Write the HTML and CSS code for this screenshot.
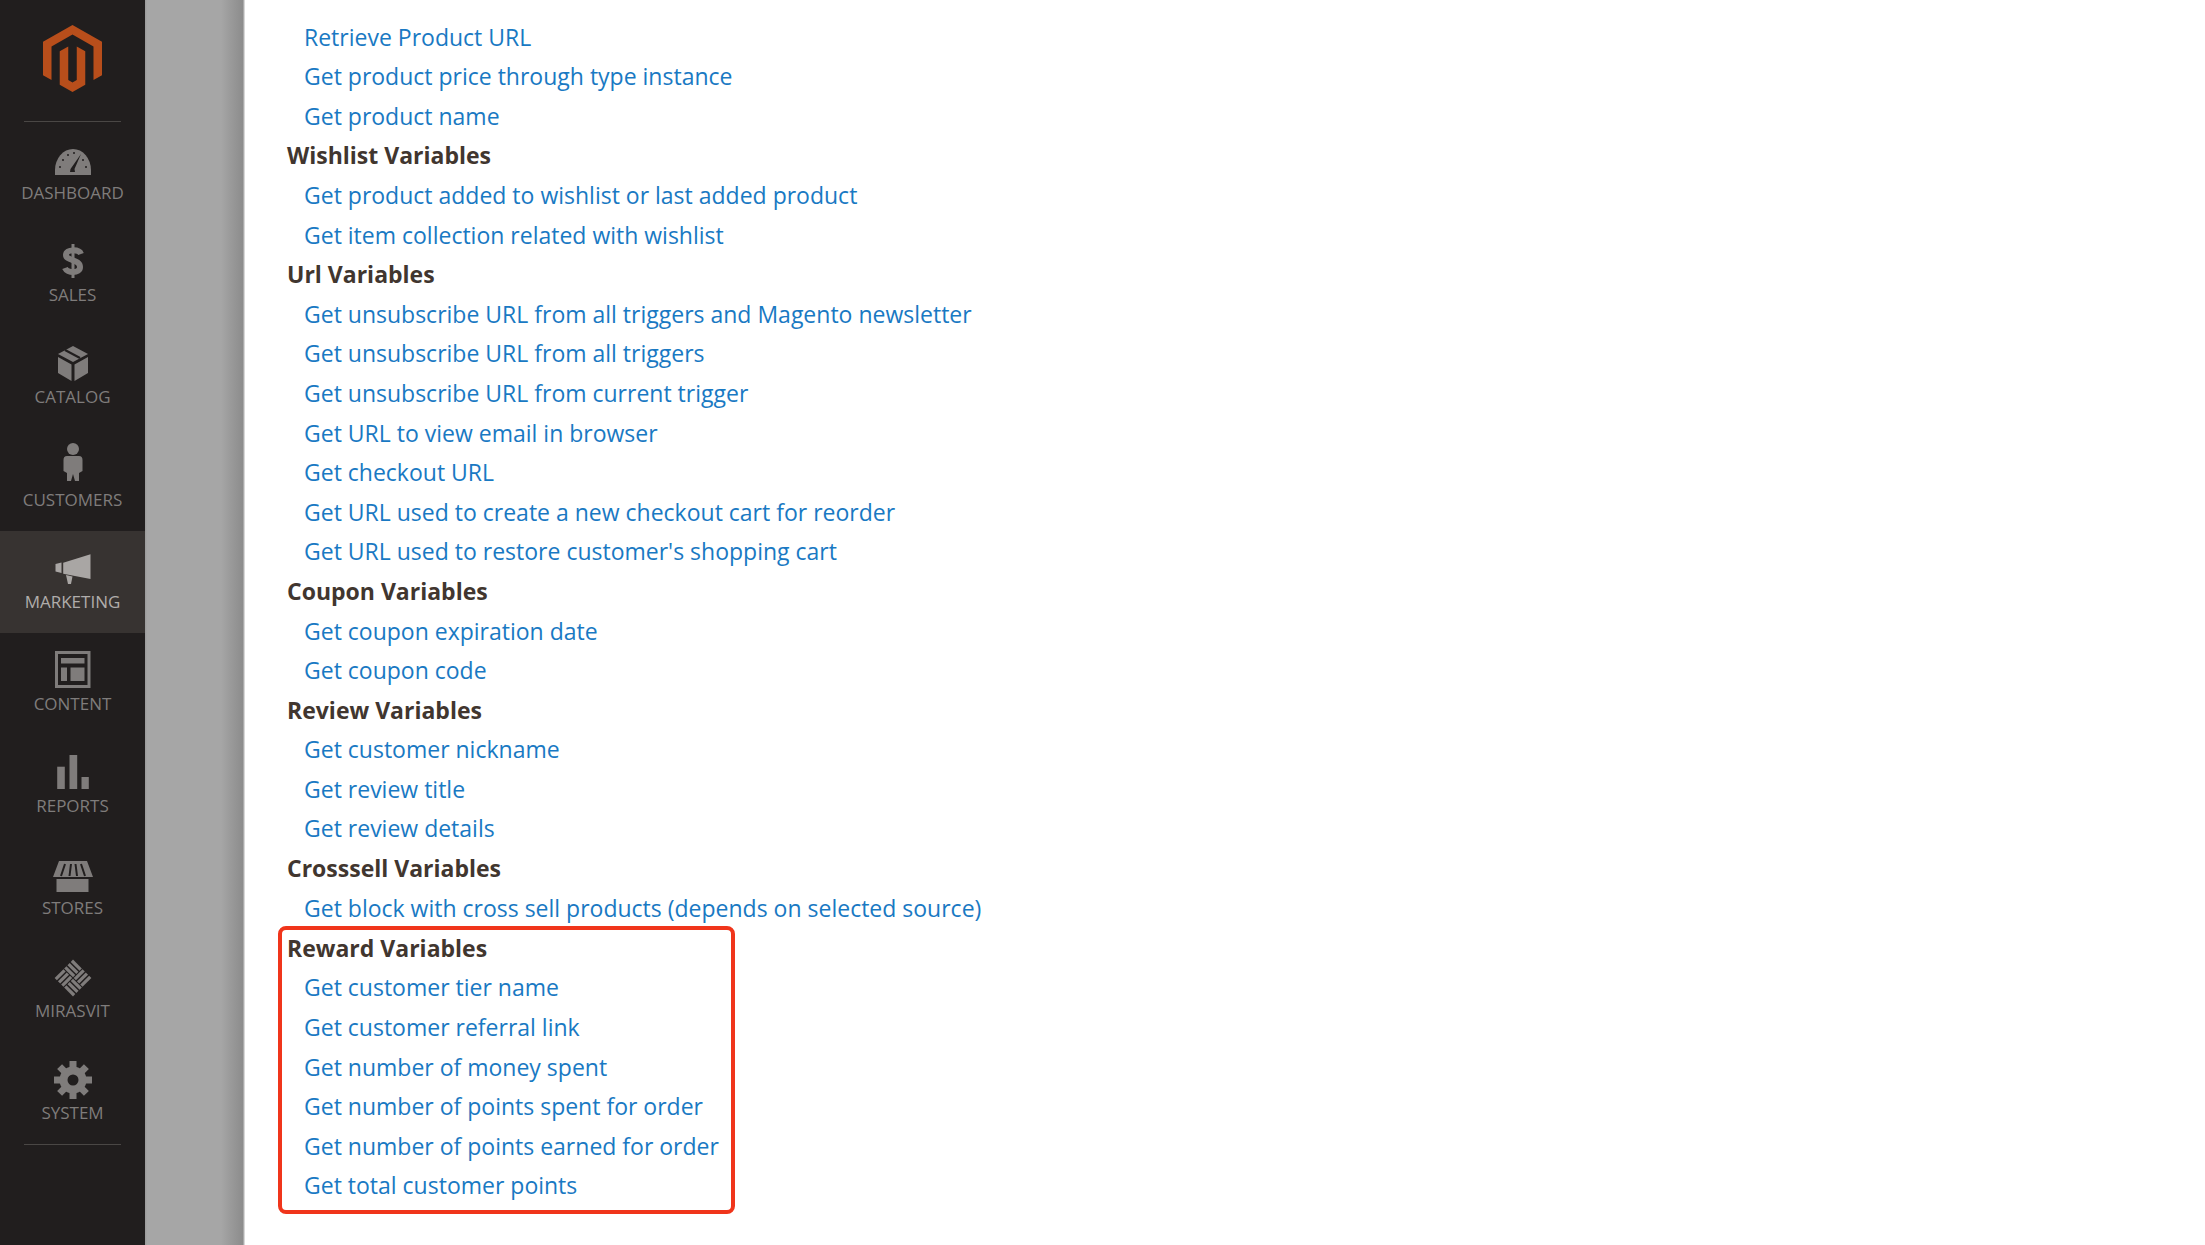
FILE: index.html
```html
<!DOCTYPE html>
<html lang="en">
<head>
<meta charset="utf-8">
<title>Email variables</title>
<link rel="stylesheet" href="styles.css">
</head>
<body>
<div class="page">
<aside class="sidebar">
  <div class="logo">
    <svg class="logo-svg" viewBox="1.6 0 20.8 24" preserveAspectRatio="none"><path d="M12 0 1.6 6v12l3 1.7V7.7L12 3.4l7.4 4.3v12l3-1.7V6z"/><path d="M13.5 19.7 12 20.6l-1.500-.9V7.700L7.500 9.400v12L12 24l4.500-2.600v-12l-3-1.700z"/></svg>
  </div>
  <nav class="nav">
    <a class="nav-item"><svg class="icon" viewBox="0 0 40 40"><path d="M2 33V28A18 21 0 0 1 38 28V33Z"/><g class="cut"><circle cx="7" cy="25" r="1"/><circle cx="10" cy="18" r="1"/><circle cx="15" cy="13" r="1"/><circle cx="21" cy="11" r="1"/><circle cx="33" cy="25" r="1"/><circle cx="30" cy="18" r="1"/><path d="M28 12 21.500 27 22 30 17 30 17.500 27Z"/></g></svg><span class="label">Dashboard</span></a>
    <a class="nav-item"><svg class="icon" viewBox="0 0 40 40"><path class="stroke" d="M28 10C26 5 13 5 13 11C13 17 27 15 27 23C27 30 14 29 12 24"/><path class="stroke thin" d="M20 0V34"/></svg><span class="label">Sales</span></a>
    <a class="nav-item"><svg class="icon" viewBox="0 0 40 40"><path d="M20 0 35 8 20 16 5 8Z"/><path d="M5 11 18.500 18.500V35L5 27Z"/><path d="M35 11 21.500 18.500V35L35 27Z"/><path class="cut-line" d="M12 4 27 12"/></svg><span class="label">Catalog</span></a>
    <a class="nav-item"><svg class="icon" viewBox="0 0 40 40"><circle cx="20" cy="0" r="6"/><path d="M14 7H26Q29.500 7 29.500 11V22L26 24V32H22L20 25 18 32H14V24L10.500 22V11Q10.500 7 14 7Z"/></svg><span class="label">Customers</span></a>
    <a class="nav-item active"><svg class="icon" viewBox="0 0 40 40"><path d="M37.500 3.300V28L10.200 22.700V11.700Z"/><path d="M2.500 13 8.500 11.500V22L2.500 20.500Z"/><path d="M13 24 19.500 25.500 18 33H15Z"/></svg><span class="label">Marketing</span></a>
    <a class="nav-item"><svg class="icon" viewBox="0 0 40 40"><rect class="frame" x="3.500" y="-.5" width="32.500" height="34"/><rect x="8" y="5" width="23.500" height="5.500"/><rect x="8" y="14.500" width="6" height="13.500"/><rect x="17.500" y="14.500" width="14" height="13.500"/></svg><span class="label">Content</span></a>
    <a class="nav-item"><svg class="icon" viewBox="0 0 40 40"><rect x="4.200" y="11.700" width="7.600" height="22.300"/><rect x="16.500" y="0" width="7.700" height="34"/><rect x="28.500" y="22" width="7.300" height="12"/></svg><span class="label">Reports</span></a>
    <a class="nav-item"><svg class="icon" viewBox="0 0 40 40"><path d="M6 4H34L40 20H0Z"/><rect x="3.500" y="20" width="32" height="15"/><path class="cut-line" d="M12 7 8 19M18 7 16.500 19M22.500 7 24 19M28 7 32 19M0 21H40"/></svg><span class="label">Stores</span></a>
    <a class="nav-item"><svg class="icon" viewBox="0 0 40 40"><g transform="translate(20 18) rotate(45)"><rect x="-13" y="-13" width="12.500" height="3.200"/><rect x="-13" y="-8.300" width="12.500" height="3.200"/><rect x="-13" y="-3.700" width="12.500" height="3.200"/><rect x=".5" y="-13" width="3.200" height="12.500"/><rect x="5.100" y="-13" width="3.200" height="12.500"/><rect x="9.800" y="-13" width="3.200" height="12.500"/><rect x="-13" y=".5" width="3.200" height="12.500"/><rect x="-8.300" y=".5" width="3.200" height="12.500"/><rect x="-3.700" y=".5" width="3.200" height="12.500"/><rect x=".5" y=".5" width="12.500" height="3.200"/><rect x=".5" y="5.100" width="12.500" height="3.200"/><rect x=".5" y="9.800" width="12.500" height="3.200"/></g></svg><span class="label">Mirasvit</span></a>
    <a class="nav-item"><svg class="icon" viewBox="0 0 40 40"><circle cx="20" cy="18" r="13.500"/><path class="stroke teeth" d="M20 -1V37M1 18H39M6.600 4.600 33.400 31.400M33.400 4.600 6.600 31.400"/><circle class="cut" cx="20" cy="18" r="5.500"/></svg><span class="label">System</span></a>
  </nav>
  <div class="rule"></div>
</aside>
<div class="backdrop"></div>
<main class="content">
  <ul class="links">
    <li><a>Retrieve Product URL</a></li>
    <li><a>Get product price through type instance</a></li>
    <li><a>Get product name</a></li>
  </ul>
  <h3>Wishlist Variables</h3>
  <ul class="links">
    <li><a>Get product added to wishlist or last added product</a></li>
    <li><a>Get item collection related with wishlist</a></li>
  </ul>
  <h3>Url Variables</h3>
  <ul class="links">
    <li><a>Get unsubscribe URL from all triggers and Magento newsletter</a></li>
    <li><a>Get unsubscribe URL from all triggers</a></li>
    <li><a>Get unsubscribe URL from current trigger</a></li>
    <li><a>Get URL to view email in browser</a></li>
    <li><a>Get checkout URL</a></li>
    <li><a>Get URL used to create a new checkout cart for reorder</a></li>
    <li><a>Get URL used to restore customer's shopping cart</a></li>
  </ul>
  <h3>Coupon Variables</h3>
  <ul class="links">
    <li><a>Get coupon expiration date</a></li>
    <li><a>Get coupon code</a></li>
  </ul>
  <h3>Review Variables</h3>
  <ul class="links">
    <li><a>Get customer nickname</a></li>
    <li><a>Get review title</a></li>
    <li><a>Get review details</a></li>
  </ul>
  <h3>Crosssell Variables</h3>
  <ul class="links">
    <li><a>Get block with cross sell products (depends on selected source)</a></li>
  </ul>
  <section class="highlight">
    <h3>Reward Variables</h3>
    <ul class="links">
      <li><a>Get customer tier name</a></li>
      <li><a>Get customer referral link</a></li>
      <li><a>Get number of money spent</a></li>
      <li><a>Get number of points spent for order</a></li>
      <li><a>Get number of points earned for order</a></li>
      <li><a>Get total customer points</a></li>
    </ul>
  </section>
</main>
</div>
</body>
</html>
```

FILE: styles.css
```css
* { box-sizing: border-box; }
html, body { margin: 0; height: 100%; overflow: hidden; background: #fff; }
body { font-family: "Open Sans", "Liberation Sans", sans-serif; }
.page { display: flex; height: 1245px; }

.sidebar { width: 145px; flex: none; background: #211e1e; }
.logo { height: 121px; padding-top: 25px; display: flex; justify-content: center; align-items: flex-start; }
.logo-svg { width: 59px; height: 67px; fill: #b84e1b; }
.nav { border-top: 1px solid #4a4745; margin: 0 24px; }
.nav-item { display: flex; flex-direction: column; align-items: center; height: 102.2px; margin: 0 -24px; padding-top: 20px; background: #211e1e; color: #7f7c7b; fill: #7f7c7b; stroke: none; }
.nav-item.active { background: #373331; color: #b0adab; fill: #a9a6a4; }
.icon { width: 40px; height: 40px; overflow: visible; flex: none; }
.label { font-size: 17px; line-height: 22px; text-transform: uppercase; white-space: nowrap; }
.cut { fill: #211e1e; }
.cut-line { fill: none; stroke: #211e1e; stroke-width: 2; }
.stroke { fill: none; stroke: #7f7c7b; stroke-width: 6; }
.thin { stroke-width: 3; }
.teeth { stroke-width: 7; }
.frame { fill: none; stroke: #7f7c7b; stroke-width: 3; }
.rule { height: 1px; margin: 0 24px; background: #4a4745; }

.backdrop { width: 100px; flex: none; background: linear-gradient(90deg, #999 0, #a6a6a6 2px, #a6a6a6 76px, #9c9c9c 84px, #8c8c8c 98px, #c8c8c8 99px, #e8e8e8 100px); }

.content { flex: 1; padding: 17.600px 0 0 42px; color: #41362f; font-size: 23px; line-height: 39.600px; }
h3 { margin: 0; font-size: inherit; line-height: inherit; font-weight: 700; }
.links { list-style: none; margin: 0; padding: 0 0 0 17px; }
.links a { color: #1979c3; }
.highlight { width: 457px; height: 288px; margin: -2.400px 0 0 -9px; padding: 0 0 0 5px; border: 4px solid #f0351b; border-radius: 8px; }
.highlight h3 { margin-top: -1px; }
```
